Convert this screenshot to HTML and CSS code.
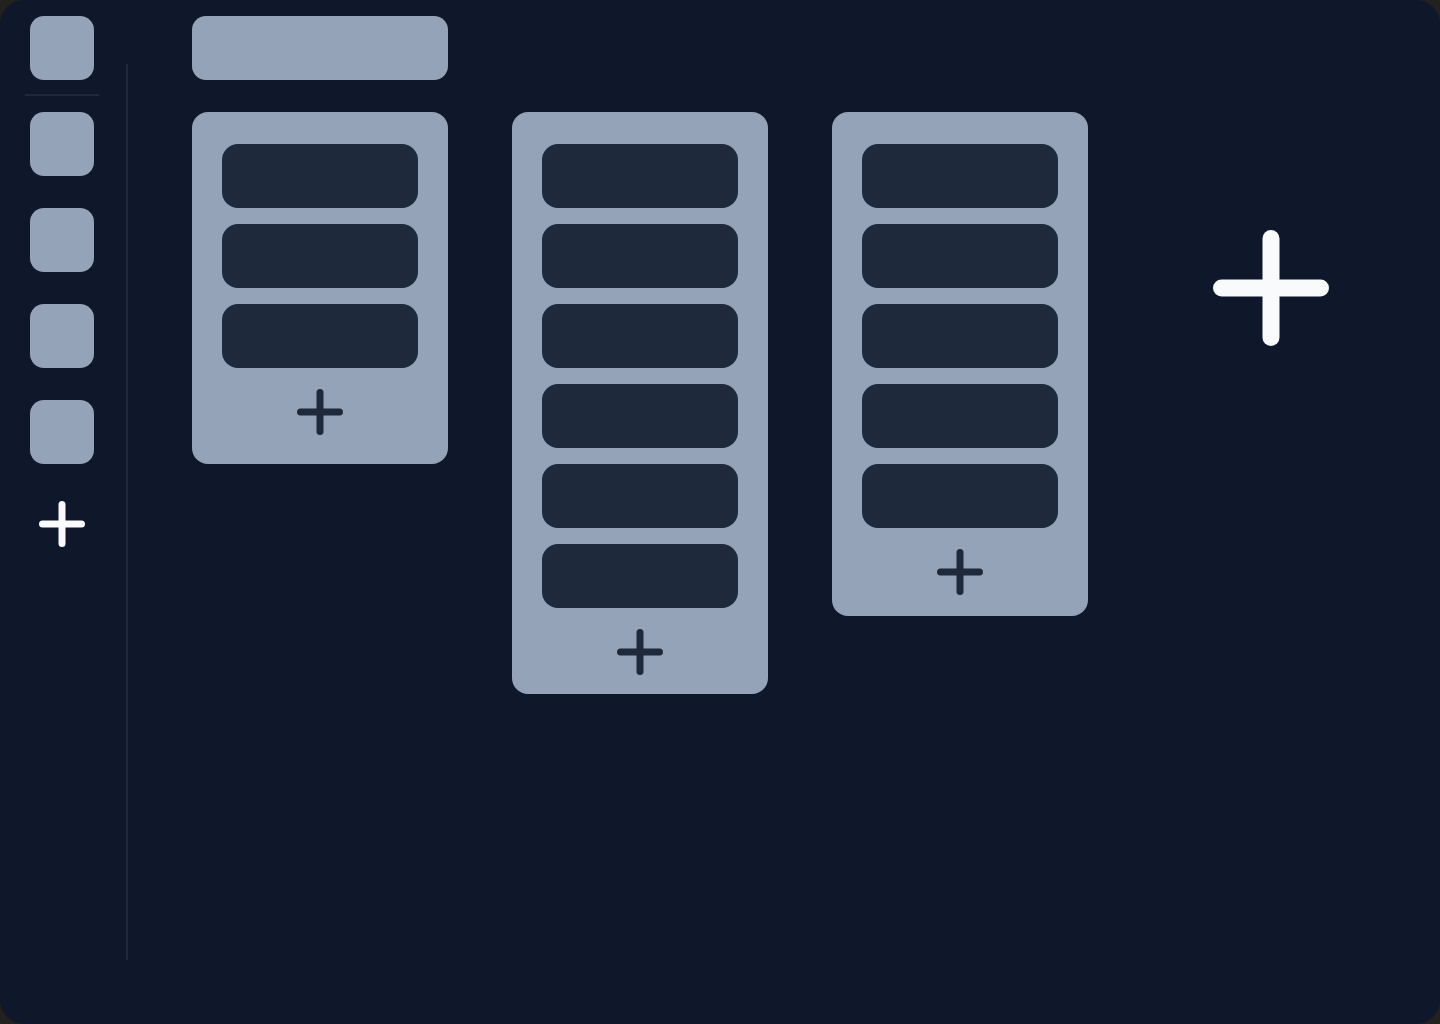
FILE: index.html
```html
<!DOCTYPE html>
<html lang="en">
<head>
  <meta charset="UTF-8">
  <title>Board</title>
  <link rel="stylesheet" href="styles.css">
</head>
<body>
  <div class="app">
    <aside class="sidebar">
      <div class="tile"></div>
      <div class="sidebar-divider"></div>
      <div class="tile-list">
        <div class="tile"></div>
        <div class="tile"></div>
        <div class="tile"></div>
        <div class="tile"></div>
      </div>
      <svg class="plus plus-light" viewBox="0 0 48 48">
        <line x1="24" y1="4.5" x2="24" y2="43.5"/>
        <line x1="4.5" y1="24" x2="43.5" y2="24"/>
      </svg>
    </aside>
    <div class="separator"></div>

    <main class="main">
      <div class="title-bar"></div>
      <div class="board">
        <section class="column col-a">
          <div class="card"></div>
          <div class="card"></div>
          <div class="card"></div>
          <svg class="plus plus-dark" viewBox="0 0 48 48">
            <line x1="24" y1="4.5" x2="24" y2="43.5"/>
            <line x1="4.5" y1="24" x2="43.5" y2="24"/>
          </svg>
        </section>
        <section class="column col-b">
          <div class="card"></div>
          <div class="card"></div>
          <div class="card"></div>
          <div class="card"></div>
          <div class="card"></div>
          <div class="card"></div>
          <svg class="plus plus-dark" viewBox="0 0 48 48">
            <line x1="24" y1="4.5" x2="24" y2="43.5"/>
            <line x1="4.5" y1="24" x2="43.5" y2="24"/>
          </svg>
        </section>
        <section class="column col-c">
          <div class="card"></div>
          <div class="card"></div>
          <div class="card"></div>
          <div class="card"></div>
          <div class="card"></div>
          <svg class="plus plus-dark" viewBox="0 0 48 48">
            <line x1="24" y1="4.5" x2="24" y2="43.5"/>
            <line x1="4.5" y1="24" x2="43.5" y2="24"/>
          </svg>
        </section>
        <div class="add-column">
          <svg class="plus-big" viewBox="0 0 116 116">
            <line x1="58" y1="8.5" x2="58" y2="107.5"/>
            <line x1="8.5" y1="58" x2="107.5" y2="58"/>
          </svg>
        </div>
      </div>
    </main>
  </div>
</body>
</html>
```

FILE: styles.css
```css
/* Reset */
* {
  box-sizing: border-box;
  margin: 0;
  padding: 0;
}

body {
  background-color: #23211e;
  width: 1440px;
  height: 1024px;
  overflow: hidden;
}

/* App shell */
.app {
  display: flex;
  height: 1024px;
  background-color: #0f172a;
  border-radius: 24px;
  overflow: hidden;
}

/* Sidebar */
.sidebar {
  width: 124px;
  padding-top: 16px;
  display: flex;
  flex-direction: column;
  align-items: center;
}

.tile {
  width: 64px;
  height: 64px;
  border-radius: 14px;
  background-color: #94a3b8;
}

.sidebar-divider {
  width: 74px;
  height: 2px;
  margin: 14px 0 16px;
  background-color: #1e293b;
}

.tile-list {
  display: flex;
  flex-direction: column;
  gap: 32px;
}

.separator {
  width: 2px;
  height: 896px;
  margin: 64px 0 0 2px;
  background-color: #1e293b;
}

/* Plus icons */
.plus {
  display: block;
  width: 48px;
  height: 48px;
  stroke-width: 7;
  stroke-linecap: round;
}

.plus-light {
  margin-top: 36px;
  stroke: #f8fafc;
}

.plus-dark {
  margin: 20px auto 0;
  stroke: #1e293b;
}

.plus-big {
  display: block;
  width: 116px;
  height: 116px;
  stroke: #f8fafc;
  stroke-width: 17;
  stroke-linecap: round;
}

/* Main area */
.main {
  flex: 1;
  padding: 16px 0 0 64px;
}

.title-bar {
  width: 256px;
  height: 64px;
  border-radius: 14px;
  background-color: #94a3b8;
}

.board {
  display: flex;
  align-items: flex-start;
  gap: 64px;
  margin-top: 32px;
}

.column {
  width: 256px;
  padding: 32px 30px 0;
  border-radius: 16px;
  background-color: #94a3b8;
  display: flex;
  flex-direction: column;
  gap: 16px;
}

.column .plus-dark {
  margin-top: 4px;
}

.col-a { height: 352px; }
.col-b { height: 582px; }
.col-c { height: 504px; }

.card {
  height: 64px;
  border-radius: 16px;
  background-color: #1e293b;
}

.add-column {
  width: 238px;
  height: 352px;
  display: flex;
  align-items: center;
  justify-content: center;
}
```
